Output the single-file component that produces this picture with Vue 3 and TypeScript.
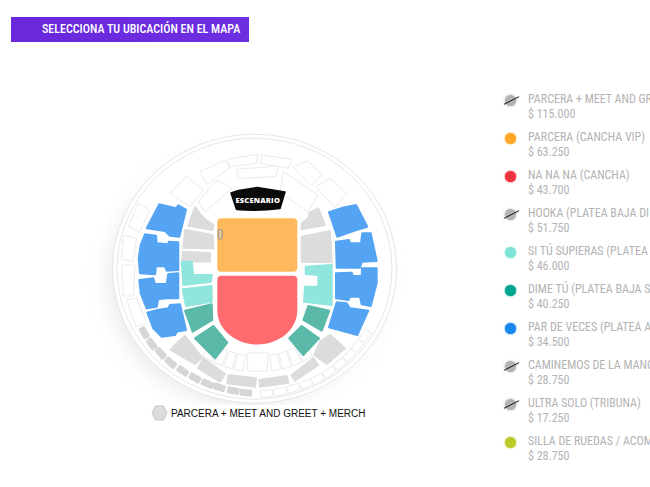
<script setup lang="ts">
type Pt = [number, number]
const d = (s: string): string => 'M' + s.trim().split(/\s+/).join('L') + 'Z'

const blue = [
  '159.3,204.3 176,208.3 178.3,205.3 186,209.7 179.3,236.7 170,235.7 165,231 146.7,228.3',
  '145,234.3 156,235.7 156.7,243.3 168,244.3 169,241.7 178.3,242.3 178.3,270 166.7,270.7 165,266.3 156,266.3 155,274.3 140,273.3 138.7,258.3 140.7,245',
  '139.3,280 153.3,278.3 155,284 166.7,284 168.3,274 178.3,273.3 178.3,298.3 168.3,298.3 158.3,299 156.7,306.7 146.7,308.3 140.7,293.3',
  '147.3,312.7 157.3,310 168.3,308.3 170,305 180,304.3 186,330 176.7,331.7 175,335 161.7,336.7 153.3,328.3',
  '329,212.3 342.7,207.7 356,205 367.3,226.7 353.3,231 337.3,236.7',
  '336,241.7 349,240 350,243.3 361,243.3 362.3,233.3 370.7,233.3 376.7,261 361.7,261.7 360,267.7 336.7,267.7',
  '336,273.3 351.7,272.7 353,276 361.7,276 362,268.3 376.7,268.3 376.7,283 370.7,306 361.7,304.3 360,296.7 350,296.7 348.3,300 336,298.3',
  '336.7,302.3 346.7,303.3 350,308.3 368.3,310.7 357.3,335 329,327.3',
].map(d)

const gray = [
  '195,207.3 204,218.3 213.3,225 212.7,230 188.3,225.7',
  '185,230 212.7,235 213.3,248.3 183.3,247.7',
  '183.3,251.7 210,253.3 210,261.7 182.3,261',
  '318.3,208.3 325,225 301.7,229.3 301.7,223.3 308.3,218.3 310,212.3',
  '330,231 331.7,262.3 301.7,261.7 301.7,236.7',
  '185,336 201.7,357.3 195,364 170.7,350 178.3,341.7',
  '203.3,358.3 225,374 220,381.7 198.3,368.3',
  '228.3,375 256,378.3 255,386.7 227.3,383.3',
  '259.3,380 286.7,376 288.3,382.7 260,386.7',
  '291.7,375 313.3,358.3 318.3,365 295,380.7',
  '330,335 345,348.3 326.7,364 314.3,355 320,341.7',
].map(d)

const mint = [
  '181.7,261.7 191.7,261.7 193.3,275 211.7,275 211,281.7 183.3,285',
  '182.7,289.3 211.7,286 211.7,301.7 186,306',
  '305.7,266.7 331.7,265 331.7,305 304,301.7 305,286.7 318.3,286.7 318.3,275 305.7,274',
].map(d)

const teal = [
  '185,310.7 211.7,304.3 212.3,320 192.7,331.7',
  '213.3,326 227.3,342.7 215,358.3 195,338.3',
  '308.3,306 329.3,310.7 321.7,330.7 303.3,320',
  '301.7,326 319,338.3 303.3,355 289.3,338.3',
].map(d)

const outlines = [
  '170,193.3 186.7,176.7 203,190 190,206.7',
  '315.7,186.7 330,178.3 346.7,193.3 335,207.7',
  '200,171.7 225,160 230,168 206.7,184.3',
  '292.7,166.7 308,161 321.7,175 311.7,185.7',
  '227.3,159.3 258,154.3 256.7,163.3 230,166.7',
  '261.7,155 291.7,159.3 288.3,168.3 260.7,163.3',
  '236.7,169.3 278.3,166 276,176.7 238.3,178.3',
  '198.3,201.7 216.7,180 232,188 205,212',
  '283.3,171.7 318.3,195 308.3,211.7 280,193',
  '138.3,203.3 150,210 139.3,232.3 128.3,226.7',
  '123.3,235 136.7,238.3 133.3,261 121.7,260',
  '121.7,265 135,265 133.3,296 123.3,296',
  '126.7,299.3 136.7,298.3 146.7,323.3 136,326.7',
  '247,353 268,353 267,371 248,371',
].map(d)

const arena: Pt = [257.5, 268]
function seat(p: Pt, w = 12.5, h = 7): { x: number; y: number; w: number; h: number; t: string } {
  const a = (Math.atan2(p[1] - arena[1], p[0] - arena[0]) * 180) / Math.PI - 90
  return { x: p[0] - w / 2, y: p[1] - h / 2, w, h, t: `rotate(${a.toFixed(1)} ${p[0]} ${p[1]})` }
}
const smallGray = ([
  [144.3, 332.7], [151.7, 344], [160.7, 353.3], [170.7, 362.7], [182.7, 371],
  [195, 378], [207.3, 383.7], [219.3, 387.3], [233.3, 390.7], [246, 392.7],
] as Pt[]).map((p) => seat(p))
const smallWhite = ([
  [266.7, 393.3], [280, 391.7], [293.3, 388.3], [306, 384], [317.7, 379],
  [329.3, 372], [340, 364], [349.3, 355.3], [357.7, 346], [365, 335.7],
] as Pt[]).map((p) => seat(p))

function sector(a1: number, a2: number, r1: number, r2: number): string {
  const pt = (a: number, r: number): string => {
    const t = ((a + 90) * Math.PI) / 180
    return `${(arena[0] + r * Math.cos(t)).toFixed(1)},${(arena[1] + r * Math.sin(t)).toFixed(1)}`
  }
  return d(`${pt(a1, r1)} ${pt(a2, r1)} ${pt(a2, r2)} ${pt(a1, r2)}`)
}
const fan = [
  sector(32, 26, 84, 104), sector(25, 20, 88, 104), sector(19, 14, 88, 104), sector(13, 8, 88, 104),
  sector(-8, -13, 88, 104), sector(-14, -19, 88, 104), sector(-20, -25, 88, 104), sector(-26, -32, 84, 104),
]

interface Item { name: string; price: string; color?: string }
const legend: Item[] = [
  { name: 'PARCERA + MEET AND GREET + MERCH', price: '$ 115.000' },
  { name: 'PARCERA (CANCHA VIP)', price: '$ 63.250', color: '#ffa726' },
  { name: 'NA NA NA (CANCHA)', price: '$ 43.700', color: '#ef3340' },
  { name: 'HOOKA (PLATEA BAJA DI', price: '$ 51.750' },
  { name: 'SI TÚ SUPIERAS (PLATEA', price: '$ 46.000', color: '#7fe3d5' },
  { name: 'DIME TÚ (PLATEA BAJA S', price: '$ 40.250', color: '#00a58e' },
  { name: 'PAR DE VECES (PLATEA A', price: '$ 34.500', color: '#1787ee' },
  { name: 'CAMINEMOS DE LA MANO', price: '$ 28.750' },
  { name: 'ULTRA SOLO (TRIBUNA)', price: '$ 17.250' },
  { name: 'SILLA DE RUEDAS / ACOM', price: '$ 28.750', color: '#bccb2c' },
]
</script>

<template>
  <div class="page">
    <h1 class="title">SELECCIONA TU UBICACIÓN EN EL MAPA</h1>
    <div class="main">
      <div class="map-col">
        <svg class="map" viewBox="0 60 440 345" width="440" height="345">
          <defs>
            <filter id="soft" x="-20%" y="-20%" width="140%" height="140%">
              <feGaussianBlur stdDeviation="10" />
            </filter>
          </defs>
          <ellipse cx="246" cy="279" rx="138" ry="126" fill="#ebebeb" filter="url(#soft)" />
          <ellipse class="ring disc" cx="254.5" cy="268.7" rx="142" ry="134.5" />
          <ellipse class="ring" cx="254.5" cy="268.7" rx="137.5" ry="130.5" />
          <path v-for="(p, i) in outlines" :key="'o' + i" class="outline" :d="p" />
          <path v-for="(p, i) in fan" :key="'f' + i" class="outline" :d="p" />
          <rect v-for="(s, i) in smallGray" :key="'g' + i" class="small-gray" :x="s.x" :y="s.y" :width="s.w" :height="s.h" rx="1.5" :transform="s.t" />
          <rect v-for="(s, i) in smallWhite" :key="'w' + i" class="outline" :x="s.x" :y="s.y" :width="s.w" :height="s.h" rx="1.5" :transform="s.t" />
          <path v-for="(p, i) in gray" :key="'gr' + i" class="sec gray" :d="p" />
          <path v-for="(p, i) in blue" :key="'b' + i" class="sec blue" :d="p" />
          <path v-for="(p, i) in mint" :key="'m' + i" class="sec mint" :d="p" />
          <path v-for="(p, i) in teal" :key="'t' + i" class="sec teal" :d="p" />
          <rect class="orange" x="217.3" y="218.3" width="80" height="53.4" rx="4" />
          <path class="red" d="M221.3 275.7H293.3Q297.3 275.7 297.3 279.7V310.5C297.3 329 279.5 344.5 257.3 344.5S217.3 329 217.3 310.5V279.7Q217.3 275.7 221.3 275.7Z" />
          <rect class="marker" x="218.2" y="229.5" width="4" height="9.5" rx="1.5" />
          <path class="stage" d="M231 193L238.5 190.5L257.3 187.5L285 192L280 208.5Q258 211.5 236.5 209.5Z" />
          <text class="stage-text" x="257.8" y="203">ESCENARIO</text>
        </svg>
        <div class="caption">
          <svg class="hex" viewBox="0 0 17 16" width="17" height="16">
            <path d="M4.5 1H12.5L16 8L12.5 15H4.5L1 8Z" />
          </svg>
          <span>PARCERA + MEET AND GREET + MERCH</span>
        </div>
      </div>
      <ul class="legend">
        <li v-for="item in legend" :key="item.name + item.price" class="item">
          <span v-if="item.color" class="dot" :style="{ background: item.color, boxShadow: '0 0 2px ' + item.color }"></span>
          <span v-else class="dot off"></span>
          <div class="info">
            <div class="name">{{ item.name }}</div>
            <div class="price">{{ item.price }}</div>
          </div>
        </li>
      </ul>
    </div>
  </div>
</template>

<style>
html, body { margin: 0; overflow: hidden; background: #fff; }
</style>

<style scoped>
.page {
  width: 650px;
  height: 487px;
  overflow: hidden;
  padding-top: 17px;
  box-sizing: border-box;
  font-family: Roboto, sans-serif;
  font-stretch: 75%;
}
.title {
  margin: 0 0 18px 11px;
  width: 207px;
  height: 25px;
  padding-left: 31px;
  background: linear-gradient(90deg, #6a27dc, #6d2fe2);
  color: #fff;
  font-size: 12px;
  font-weight: 500;
  line-height: 25px;
  white-space: nowrap;
  overflow: hidden;
}
.main { display: flex; align-items: flex-start; }
.map-col { flex: 0 0 440px; }
.map { display: block; }
.caption {
  display: flex;
  align-items: center;
  gap: 3px;
  margin: 0 0 0 151px;
  height: 16px;
  font-family: "Liberation Sans", Arial, sans-serif;
  font-size: 10px;
  font-stretch: normal;
  color: #111;
  white-space: nowrap;
}
.hex path { fill: #dcdcdc; stroke: #c4c4c4; stroke-width: 1; }
.ring { fill: none; stroke: #e6e6e6; stroke-width: 1; }
.disc { fill: #fff; }
.outline { fill: #fff; stroke: #ebebeb; stroke-width: 1; stroke-linejoin: round; }
.small-gray { fill: #d6d6d6; }
.sec { stroke-width: 2; stroke-linejoin: round; }
.blue { fill: #54a4f3; stroke: #54a4f3; }
.gray { fill: #dcdcdc; stroke: #dcdcdc; }
.mint { fill: #90e6dc; stroke: #90e6dc; }
.teal { fill: #5bb9a9; stroke: #5bb9a9; }
.orange { fill: #ffb95c; }
.red { fill: #ff6b6e; }
.marker { fill: #e6c9a0; stroke: #8b8b8b; stroke-width: 1; }
.stage { fill: #0a0a0a; stroke: #0a0a0a; stroke-width: 1.5; stroke-linejoin: round; }
.stage-text {
  fill: #fff;
  font-family: "Open Sans", sans-serif;
  font-size: 7.5px;
  font-weight: 800;
  font-stretch: normal;
  letter-spacing: 0.2px;
  text-anchor: middle;
}
.legend {
  list-style: none;
  margin: 0;
  padding: 32px 0 0 65px;
  flex: 0 0 145px;
  box-sizing: content-box;
  overflow: hidden;
}
.item {
  display: flex;
  align-items: flex-start;
  gap: 12px;
  height: 38px;
  white-space: nowrap;
}
.dot {
  position: relative;
  flex: 0 0 11px;
  width: 11px;
  height: 11px;
  margin-top: 3px;
  border-radius: 50%;
}
.off { background: #b2b2b2; box-shadow: 0 0 3px #bbb; }
.off::after {
  content: "";
  position: absolute;
  left: -2px;
  top: 5px;
  width: 17px;
  height: 1px;
  background: #111;
  transform: rotate(-27deg);
}
.info {
  font-size: 12px;
  line-height: 15px;
  color: #b3b3b3;
}
</style>
